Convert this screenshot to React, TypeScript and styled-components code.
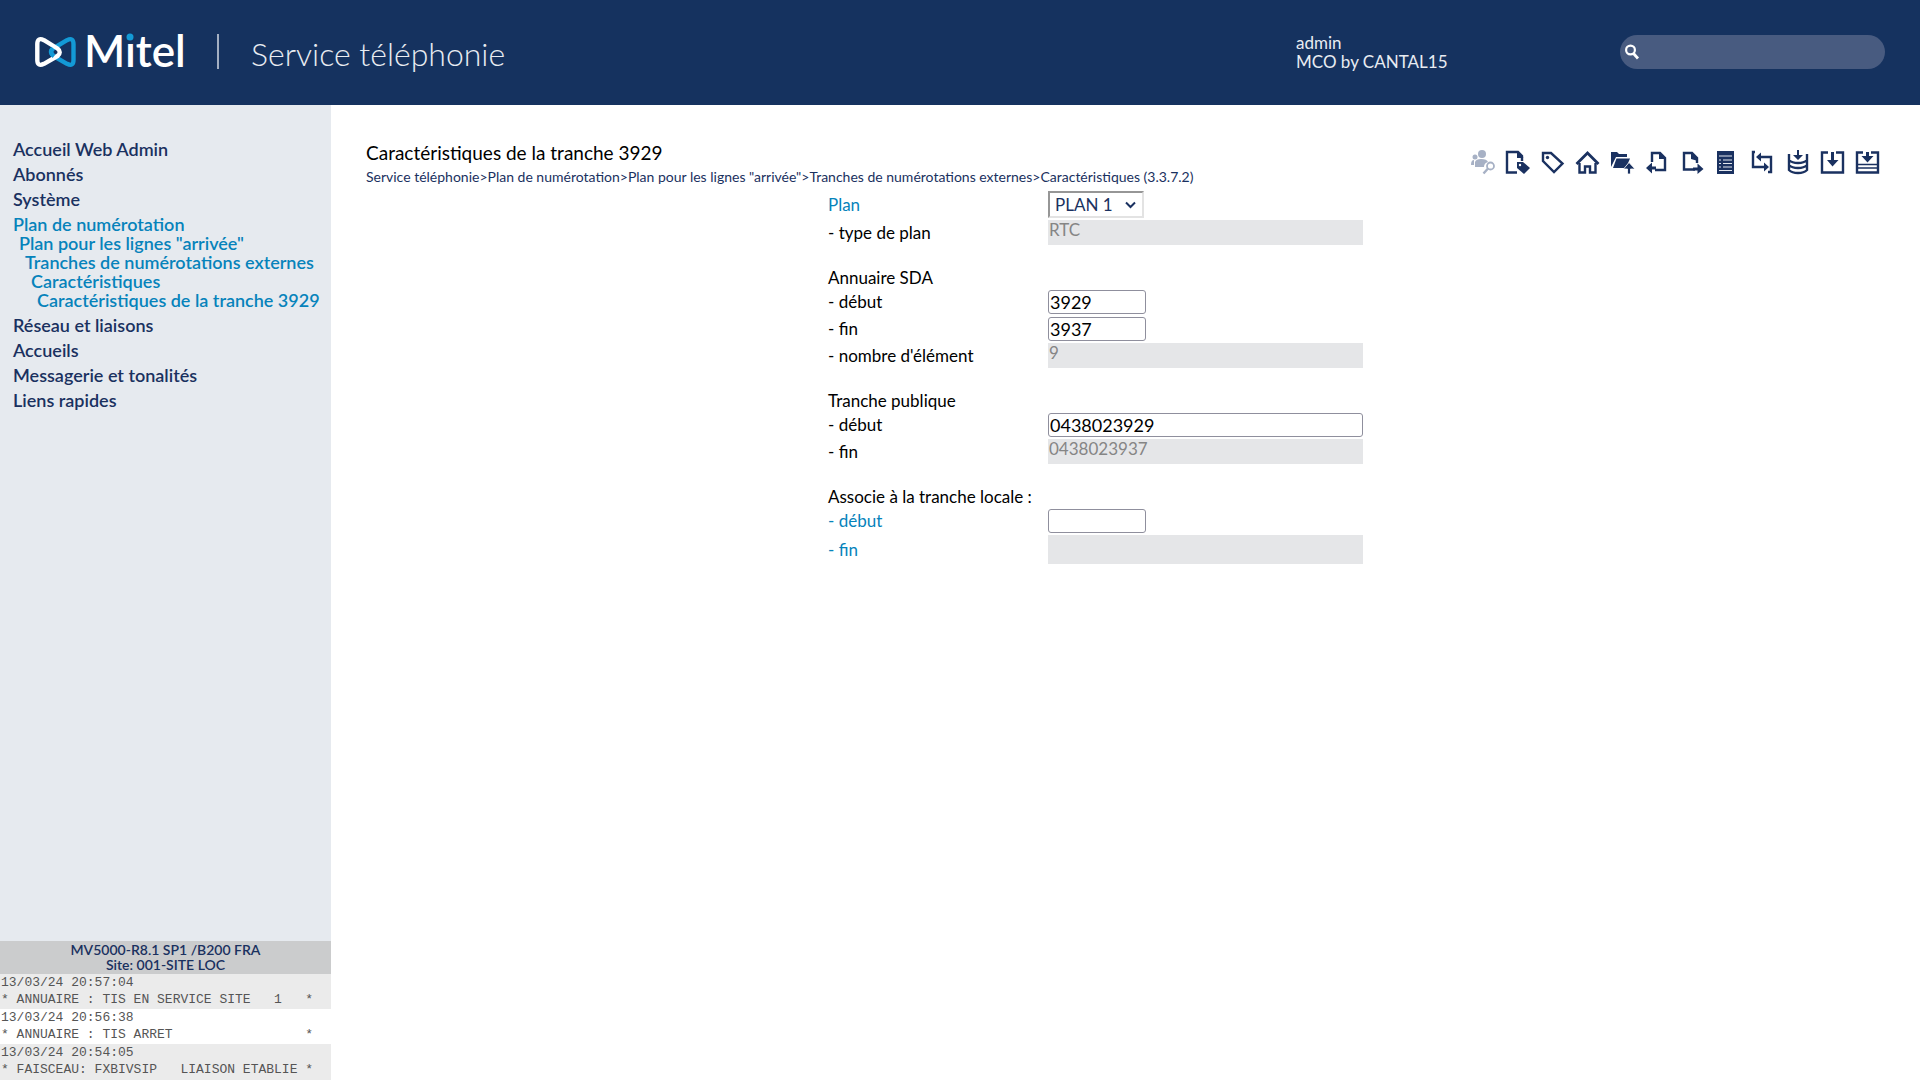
import React from "react";
import styled, { createGlobalStyle } from "styled-components";

const color = {
  header: "#15325f",
  navy: "#1a3160",
  blue: "#0683bb",
  side: "#e6eaef",
  field: "#e5e6e8",
};

const Global = createGlobalStyle`
  *, *::before, *::after { box-sizing: border-box; }
  body { margin: 0; background: #fff; color: #000; font-family: Lato, "Open Sans", sans-serif; font-size: 16px; }
  a { color: inherit; text-decoration: none; }
`;

const Page = styled.div`
  display: flex;
  flex-direction: column;
  min-height: 100vh;
`;

const Header = styled.header`
  display: flex;
  align-items: center;
  height: 105px;
  padding: 0 35px 2px;
  background: ${color.header};
  color: #e8ecf2;
`;

const LogoLink = styled.a`
  display: flex;
  padding-right: 30px;
`;

const ServiceName = styled.div`
  display: flex;
  align-items: center;
  flex: 1;
  font-size: 32px;
  font-weight: 300;
  line-height: 38px;

  &::before {
    content: "";
    width: 2px;
    height: 35px;
    margin-right: 32px;
    background: #a3afc2;
  }
  span { padding-top: 4px; }
`;

const UserInfo = styled.div`
  width: 324px;
  font-size: 17px;
  line-height: 19px;
`;

const SearchBox = styled.label`
  display: flex;
  align-items: center;
  gap: 6px;
  width: 265px;
  height: 34px;
  padding: 0 5px;
  border-radius: 17px;
  background: #485b80;

  input {
    flex: 1;
    min-width: 0;
    border: 0;
    outline: 0;
    background: transparent;
    color: #fff;
    font: inherit;
  }
`;

const Body = styled.div`
  display: flex;
  flex: 1;
`;

const Sidebar = styled.aside`
  display: flex;
  flex-direction: column;
  justify-content: space-between;
  width: 331px;
  flex-shrink: 0;
  background: ${color.side};
`;

const Menu = styled.nav`
  display: flex;
  flex-direction: column;
  gap: 6px;
  padding: 35px 0 0 13px;
  color: ${color.navy};
  font-size: 18px;
  font-weight: 600;
  line-height: 19px;
  white-space: nowrap;
`;

const Branch = styled.div`
  display: flex;
  flex-direction: column;
  color: ${color.blue};
`;

const BranchLink = styled.a<{ $depth: number }>`
  padding-left: ${(p) => p.$depth * 6}px;
`;

const Status = styled.div`
  padding-bottom: 1px;
  background: #ebebeb;
`;

const Version = styled.div`
  padding: 1px 0 2px;
  background: #cbcccd;
  color: ${color.navy};
  font-size: 14px;
  font-weight: 600;
  line-height: 15px;
  text-align: center;
`;

const LogEntry = styled.pre`
  margin: 0;
  padding: 0 1px 1px;
  background: #ebebeb;
  color: #555;
  font-family: "Liberation Mono", "Courier New", monospace;
  font-size: 13px;
  line-height: 17px;

  &:nth-child(odd) { background: #fff; }
`;

const Main = styled.main`
  flex: 1;
  min-width: 0;
  padding: 35px;
`;

const TopRow = styled.div`
  display: flex;
  justify-content: space-between;
`;

const Title = styled.h1`
  margin: 0;
  font-size: 19px;
  font-weight: 400;
  line-height: 25px;
`;

const Crumbs = styled.nav`
  color: ${color.navy};
  font-size: 14px;
  line-height: 24px;
`;

const Tools = styled.div`
  display: flex;
  gap: 10px;
  padding: 10px 5px 0 0;
`;

const Tool = styled.button`
  width: 25px;
  height: 25px;
  padding: 0;
  border: 0;
  background: none;
  color: ${color.navy};
  cursor: pointer;

  &:disabled { color: #a7b1c5; }
  svg { display: block; }
`;

const FormArea = styled.div`
  display: flex;
  justify-content: center;
  padding: 2px 60px 0 0;
`;

const Form = styled.form`
  display: grid;
  grid-template-columns: 218px 315px;
  grid-auto-rows: minmax(25px, auto);
  gap: 2px;
  align-items: center;
`;

const Label = styled.label<{ $link?: boolean }>`
  color: ${(p) => (p.$link ? color.blue : "#000")};
  font-size: 17px;
  line-height: 20px;
`;

const Section = styled.h2`
  grid-column: 1 / -1;
  margin: 0;
  padding-top: 21px;
  font-size: 17px;
  font-weight: 400;
  line-height: 19px;
`;

const SelectBox = styled.div`
  display: grid;
  align-items: center;
  width: 96px;

  > * { grid-area: 1 / 1; }
  svg { justify-self: end; margin-right: 8px; pointer-events: none; }
`;

const PlanSelect = styled.select`
  appearance: none;
  width: 100%;
  height: 27px;
  padding: 0 5px;
  border: 2px solid;
  border-color: #969696 #e3e3e3 #e3e3e3 #969696;
  border-radius: 0;
  background: #fff;
  color: ${color.navy};
  font-family: inherit;
  font-size: 17px;
`;

const Input = styled.input<{ $wide?: boolean }>`
  width: ${(p) => (p.$wide ? "100%" : "98px")};
  height: 24px;
  padding: 0 1px;
  border: 1px solid #8f8f9d;
  border-radius: 3px;
  background: #fff;
  color: #000;
  font-family: inherit;
  font-size: 18px;
`;

const ReadOnly = styled.output<{ $tall?: boolean }>`
  height: ${(p) => (p.$tall ? 29 : 25)}px;
  padding-left: 1px;
  background: ${color.field};
  color: #858585;
  font-size: 17px;
  line-height: 20px;
`;

function Logo() {
  return (
    <svg width="152" height="64" viewBox="0 -12 152 64" role="img" aria-label="Mitel">
      <g fill="none" strokeWidth="4.400" strokeLinejoin="round">
        <path d="M18 16.500L32 8.200Q38.500 5 38.500 12V28Q38.500 35 32 31.800L18.500 24Q14 20 18 16.500Z" stroke="#139ad6" />
        <path d="M22.500 16.500L9 8.200Q2.300 5 2.300 12V28Q2.300 35 9 31.800L22.500 24Q27 20 22.500 16.500Z" stroke="#fff" />
        <path d="M19 24.300Q13.500 20 18 16.500" stroke="#139ad6" />
      </g>
      <text x="49" y="35" fill="#fff" fontFamily="Lato, sans-serif" fontSize="44" fontWeight="600">Mitel</text>
      <circle cx="95" cy="5" r="5" fill={color.header} />
      <circle cx="95" cy="5" r="3.500" fill="#139ad6" />
    </svg>
  );
}

const stroke = { fill: "none", stroke: "currentColor", strokeWidth: 2.4 };

const tools: { name: string; off?: boolean; art: React.ReactNode }[] = [
  {
    name: "Rechercher un abonné",
    off: true,
    art: (
      <>
        <circle cx="12" cy="4" r="4" fill="currentColor" />
        <circle cx="5" cy="7" r="2.500" fill="currentColor" />
        <path d="M5 17V12Q6 9 11 9Q17 9 18 12Q14 13 14 17ZM1 15Q1 10 4 10V15Z" fill="currentColor" />
        <circle cx="20.500" cy="16" r="3.500" {...stroke} strokeWidth="1.800" />
        <path d="M18 18.500L13.500 23.500" {...stroke} />
      </>
    ),
  },
  {
    name: "Étiqueter la fiche",
    art: (
      <>
        <path d="M12 22.500H2V2H13L17 6V11" {...stroke} />
        <path d="M12 1L18.500 8H12Z" fill="currentColor" />
        <path d="M12 12H18L25 18L19 24L12 18Z" fill="currentColor" />
        <circle cx="15" cy="15" r="1.200" fill="#fff" />
      </>
    ),
  },
  {
    name: "Étiquette",
    art: (
      <>
        <path d="M3 3H11L22.500 13.500L14 22L3 11Z" {...stroke} />
        <circle cx="7.500" cy="7.500" r="1.700" fill="currentColor" />
      </>
    ),
  },
  {
    name: "Accueil",
    art: (
      <>
        <path d="M1.500 14L12.500 3L23.500 14" {...stroke} strokeWidth="2.800" />
        <path d="M4.500 13V22.500H10V16.500H15V22.500H20.500V13" {...stroke} />
      </>
    ),
  },
  {
    name: "Dossier parent",
    art: (
      <>
        <path d="M1 17V2H7L9 4H17V7H6Z" fill="currentColor" />
        <path d="M6.500 8.500H20L16 18H3Z" fill="currentColor" />
        <path d="M13.500 19L19 12.500L25 19H20.500V24H17.500V19Z" fill="currentColor" stroke="#fff" strokeWidth="0.800" />
      </>
    ),
  },
  {
    name: "Fiche précédente",
    art: (
      <>
        <path d="M7 12V3H15L20 8V20H10" {...stroke} />
        <path d="M14 2L21 9H14Z" fill="currentColor" />
        <path d="M1 18L7 12.500V16.500H11V19.500H7V23.500Z" fill="currentColor" />
      </>
    ),
  },
  {
    name: "Fiche suivante",
    art: (
      <>
        <path d="M17 13V8L12 3H4V19.500H15" {...stroke} />
        <path d="M11 2L18 9V11L11 9Z" fill="currentColor" />
        <path d="M23.500 19L17.500 13.500V17.500H13V20.500H17.500V24Z" fill="currentColor" />
      </>
    ),
  },
  {
    name: "Liste",
    art: (
      <>
        <path d="M2 1H19V24H2Z" fill="currentColor" />
        <path d="M4 6H17M4 10H6M8 10H17M4 13.500H6M8 13.500H17M4 17H6M8 17H17M4 20.500H17" stroke="#e3e7ee" strokeWidth="1.200" />
      </>
    ),
  },
  {
    name: "Échanger",
    art: (
      <>
        <path d="M5 2H3V17H14M8 7H21V22H18" {...stroke} />
        <path d="M6 7L11 2.500V11.500ZM19 17L14 12.500V21.500Z" fill="currentColor" />
      </>
    ),
  },
  {
    name: "Enregistrer en base",
    art: (
      <>
        <path d="M4 4V20Q7 23 13 23Q19 23 22 20V4M4 10Q7 13 13 13Q19 13 22 10M4 15Q7 18 13 18Q19 18 22 15" {...stroke} />
        <path d="M8 5H12V0H14V5H18L13 10Z" fill="currentColor" />
      </>
    ),
  },
  {
    name: "Importer",
    art: (
      <>
        <path d="M8 2.500H2V22.500H23V2.500H16" {...stroke} />
        <path d="M7 10H11V2H14V10H18.500L12.500 16.500Z" fill="currentColor" />
      </>
    ),
  },
  {
    name: "Importer la liste",
    art: (
      <>
        <path d="M8 2.500H2V22.500H23V2.500H16" {...stroke} />
        <path d="M3 14.500H22M3 18H22" {...stroke} strokeWidth="1.400" />
        <path d="M6.500 6H11V2H14V6H18.500L12.500 12.500Z" fill="currentColor" />
      </>
    ),
  },
];

const before = ["Accueil Web Admin", "Abonnés", "Système"];
const branch = [
  "Plan de numérotation",
  'Plan pour les lignes "arrivée"',
  "Tranches de numérotations externes",
  "Caractéristiques",
  "Caractéristiques de la tranche 3929",
];
const after = ["Réseau et liaisons", "Accueils", "Messagerie et tonalités", "Liens rapides"];
const crumbs = [
  "Service téléphonie",
  "Plan de numérotation",
  'Plan pour les lignes "arrivée"',
  "Tranches de numérotations externes",
  "Caractéristiques (3.3.7.2)",
];
const log = [
  "13/03/24 20:57:04\n* ANNUAIRE : TIS EN SERVICE SITE   1   *",
  "13/03/24 20:56:38\n* ANNUAIRE : TIS ARRET                 *",
  "13/03/24 20:54:05\n* FAISCEAU: FXBIVSIP   LIAISON ETABLIE *",
];

export default function App() {
  return (
    <Page>
      <Global />
      <Header>
        <LogoLink href="#"><Logo /></LogoLink>
        <ServiceName><span>Service téléphonie</span></ServiceName>
        <UserInfo>
          <div>admin</div>
          <div>MCO by CANTAL15</div>
        </UserInfo>
        <SearchBox>
          <svg width="14" height="16" viewBox="0 0 14 16" fill="none" stroke="#fff" strokeWidth="2.200">
            <circle cx="5.500" cy="6" r="4.400" />
            <path d="M8.500 9.500L13 14.500" strokeWidth="2.800" />
          </svg>
          <input type="text" aria-label="Rechercher" />
        </SearchBox>
      </Header>
      <Body>
        <Sidebar>
          <Menu>
            {before.map((t) => <a href="#" key={t}>{t}</a>)}
            <Branch>
              {branch.map((t, i) => <BranchLink href="#" key={t} $depth={i}>{t}</BranchLink>)}
            </Branch>
            {after.map((t) => <a href="#" key={t}>{t}</a>)}
          </Menu>
          <Status>
            <Version>MV5000-R8.1 SP1 /B200 FRA<br />Site: 001-SITE LOC</Version>
            {log.map((t) => <LogEntry key={t}>{t}</LogEntry>)}
          </Status>
        </Sidebar>
        <Main>
          <TopRow>
            <div>
              <Title>Caractéristiques de la tranche 3929</Title>
              <Crumbs>
                {crumbs.map((t, i) => (
                  <React.Fragment key={t}>{i > 0 && ">"}<a href="#">{t}</a></React.Fragment>
                ))}
              </Crumbs>
            </div>
            <Tools>
              {tools.map((t) => (
                <Tool key={t.name} type="button" aria-label={t.name} disabled={t.off}>
                  <svg width="25" height="25" viewBox="0 0 25 25">{t.art}</svg>
                </Tool>
              ))}
            </Tools>
          </TopRow>
          <FormArea>
            <Form>
              <Label htmlFor="plan" $link>Plan</Label>
              <SelectBox>
                <PlanSelect id="plan"><option>PLAN 1</option></PlanSelect>
                <svg width="11" height="8" viewBox="0 0 11 8" fill="none" stroke={color.navy} strokeWidth="2">
                  <path d="M1 1.500L5.500 6L10 1.500" />
                </svg>
              </SelectBox>
              <Label htmlFor="type">- type de plan</Label>
              <ReadOnly id="type">RTC</ReadOnly>

              <Section>Annuaire SDA</Section>
              <Label htmlFor="sda-start">- début</Label>
              <Input id="sda-start" type="text" defaultValue="3929" />
              <Label htmlFor="sda-end">- fin</Label>
              <Input id="sda-end" type="text" defaultValue="3937" />
              <Label htmlFor="count">- nombre d'élément</Label>
              <ReadOnly id="count">9</ReadOnly>

              <Section>Tranche publique</Section>
              <Label htmlFor="pub-start">- début</Label>
              <Input id="pub-start" type="text" defaultValue="0438023929" $wide />
              <Label htmlFor="pub-end">- fin</Label>
              <ReadOnly id="pub-end">0438023937</ReadOnly>

              <Section>Associe à la tranche locale :</Section>
              <Label htmlFor="loc-start" $link>- début</Label>
              <Input id="loc-start" type="text" />
              <Label htmlFor="loc-end" $link>- fin</Label>
              <ReadOnly id="loc-end" $tall />
            </Form>
          </FormArea>
        </Main>
      </Body>
    </Page>
  );
}
